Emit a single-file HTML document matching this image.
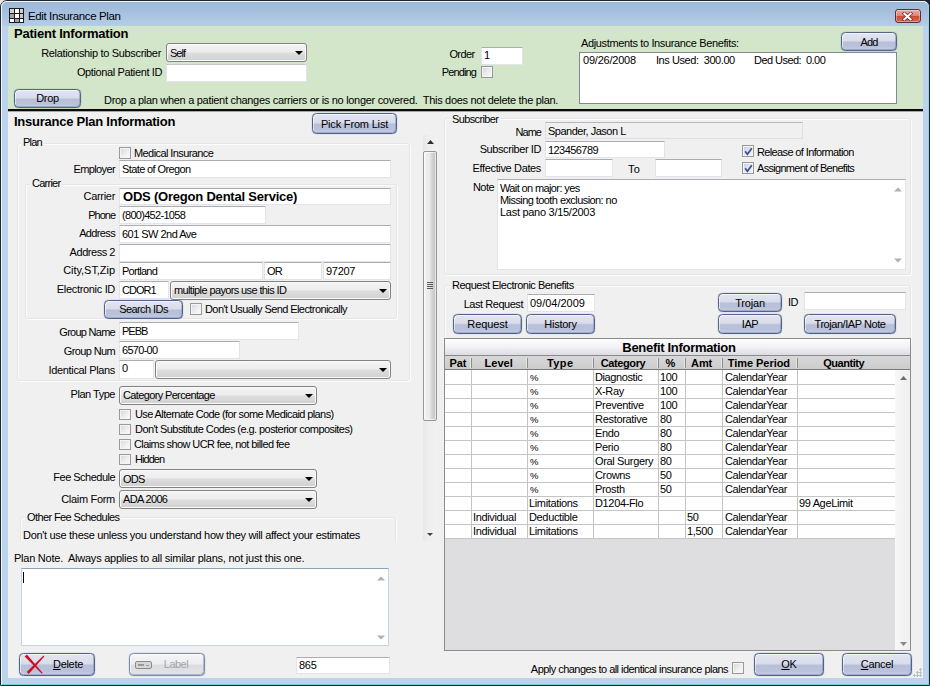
<!DOCTYPE html>
<html>
<head>
<meta charset="utf-8">
<title>Edit Insurance Plan</title>
<style>
html,body{margin:0;padding:0;}
body{width:930px;height:686px;overflow:hidden;background:#e9e9e2;font-family:"Liberation Sans",sans-serif;font-size:11px;color:#000;letter-spacing:-0.3px;position:relative;}
.a{position:absolute;white-space:pre;line-height:13px;}
.r{text-align:right;}
.b13{font-weight:bold;font-size:13px;letter-spacing:-0.25px;line-height:15px;}
#win{position:absolute;left:0;top:0;width:928px;height:684px;border:1px solid #1c2630;border-radius:7px 7px 1px 1px;background:#bbd3ec;overflow:hidden;}
#winhi{position:absolute;left:1px;top:1px;width:928px;height:684px;border:1px solid #f4f8fc;border-bottom-color:#6fcfe2;border-right-color:#86d4e6;border-radius:6px 6px 0 0;box-sizing:border-box;}
#title{position:absolute;left:2px;top:2px;width:926px;height:24px;background:linear-gradient(#9db9d8 0,#a5c0de 40%,#b4cde8 100%);border-radius:5px 5px 0 0;}
#client{position:absolute;left:7.5px;top:26px;width:915px;height:652px;background:#f0f0f0;}
#green{position:absolute;left:7.5px;top:26px;width:915px;height:83px;background:#d3e6c9;}
#bline{position:absolute;left:7.5px;top:109px;width:915px;height:2px;background:#0a0a0a;box-shadow:0 1px 0 rgba(0,0,0,.3);}
.tb{position:absolute;box-sizing:border-box;background:#fff;border:1px solid #e1e5ea;border-top-color:#abadb3;white-space:pre;line-height:14px;padding:1px 0 0 2px;overflow:hidden;}
.cb{position:absolute;box-sizing:border-box;border:1px solid #828282;border-radius:3px;background:linear-gradient(#f4f4f4 0,#ececec 48%,#dedede 52%,#d0d0d0 100%);box-shadow:inset 0 0 0 1px #fbfbfb;white-space:pre;line-height:15px;padding:1px 0 0 3px;overflow:hidden;}
.cb:after{content:"";position:absolute;right:3px;top:7px;border:4px solid transparent;border-top:4px solid #000;border-bottom:0;}
.ck{position:absolute;box-sizing:border-box;width:12px;height:12px;border:1px solid #98999a;background:linear-gradient(135deg,#d4d5d6 0,#eeeeef 55%,#fbfbfb 100%);box-shadow:inset 0 0 0 1px #f4f4f4;}
.gb{position:absolute;box-sizing:border-box;border:1px solid #e5e5e5;border-radius:3px;box-shadow:inset 1px 1px 0 #fcfcfc,1px 1px 0 #fcfcfc;}
.gl{position:absolute;background:#f0f0f0;padding:0 2px;line-height:13px;white-space:pre;}
.bt{position:absolute;box-sizing:border-box;border:1px solid #51648a;border-radius:4.5px;text-align:center;white-space:pre;
 background:linear-gradient(#e3e6f0 0,#d9dcea 45%,#b7bfd9 55%,#b9c1db 80%,#c6cce1 100%);box-shadow:inset 1px 1px 0 rgba(255,255,255,.55),inset -1px -1px 0 rgba(110,128,170,.45),0 0 1px rgba(60,80,120,.75);}
</style>
</head>
<body>
<div style="position:absolute;left:922px;top:0;width:8px;height:8px;background:#20242a"></div>
<div id="win">
</div>
<div id="winhi"></div>
<div id="title"></div>
<div id="client"></div>
<div id="green"></div>
<div id="bline"></div>
<!--TITLE-->
<svg class="a" style="left:9px;top:8px" width="15" height="15" viewBox="0 0 15 15">
<rect x="0" y="0" width="15" height="15" fill="#1c1c1c"/>
<rect x="1" y="1" width="4" height="4" fill="#d9cdd1"/><rect x="6" y="1" width="4" height="4" fill="#ffffff"/><rect x="11" y="1" width="3" height="4" fill="#d9cdd1"/>
<rect x="1" y="6" width="4" height="4" fill="#a6a2a6"/><rect x="6" y="6" width="4" height="4" fill="#ffffff"/><rect x="11" y="6" width="3" height="4" fill="#cfc6ca"/>
<rect x="1" y="11" width="4" height="3" fill="#ffffff"/><rect x="6" y="11" width="4" height="3" fill="#a6a2a6"/><rect x="11" y="11" width="3" height="3" fill="#ffffff"/>
</svg>
<div class="a" style="left:28px;top:9px;font-size:11.5px;line-height:14px;color:#000;letter-spacing:-0.38px">Edit Insurance Plan</div>
<div class="a" style="left:895px;top:9px;width:26px;height:14px;box-sizing:border-box;border:1px solid #57303a;border-radius:3px;background:linear-gradient(#e9aca0 0,#dd8474 48%,#cc4b36 52%,#d8644a 100%);box-shadow:inset 0 0 0 1px rgba(255,255,255,.35)"></div>
<svg class="a" style="left:902px;top:11.5px" width="11" height="9" viewBox="0 0 11 9"><path d="M2.3 1.6 L8.7 7.4 M8.7 1.6 L2.3 7.4" stroke="#5a3038" stroke-width="3.4" stroke-linecap="square"/><path d="M2.3 1.6 L8.7 7.4 M8.7 1.6 L2.3 7.4" stroke="#fff" stroke-width="2" stroke-linecap="square"/></svg>
<!--GREEN-->
<div class="a b13" style="left:14px;top:26px;letter-spacing:-0.22px">Patient Information</div>
<div class="a r" style="left:20px;width:141px;top:47px;letter-spacing:-0.33px">Relationship to Subscriber</div>
<div class="cb" style="left:166px;top:43px;width:141px;height:19px;padding-top:2px;letter-spacing:-1.0px">Self</div>
<div class="a r" style="left:20px;width:142px;top:66px;letter-spacing:-0.38px">Optional Patient ID</div>
<div class="tb" style="left:166px;top:64px;width:141px;height:18px;border-top-color:#c2c8c6"></div>
<div class="bt" style="left:14px;top:89px;width:67px;height:19px;line-height:17px">Drop</div>
<div class="a" style="left:104px;top:94px;letter-spacing:-0.3px">Drop a plan when a patient changes carriers or is no longer covered.  This does not delete the plan.</div>
<div class="a r" style="left:400px;width:74.5px;top:48px;letter-spacing:-0.61px">Order</div>
<div class="tb" style="left:481px;top:47px;width:42px;height:18px;padding-top:0">1</div>
<div class="a r" style="left:400px;width:76px;top:66px;letter-spacing:-0.88px">Pending</div>
<div class="ck" style="left:481px;top:66px"></div>
<div class="a" style="left:581px;top:37px;letter-spacing:-0.36px">Adjustments to Insurance Benefits:</div>
<div class="bt" style="left:841px;top:32px;width:56px;height:19px;line-height:18px;letter-spacing:-0.8px">Add</div>
<div class="tb" style="left:579px;top:52px;width:318px;height:52px;border-color:#828790"></div>
<div class="a" style="left:583px;top:54px;letter-spacing:-0.22px">09/26/2008</div>
<div class="a" style="left:656px;top:54px;letter-spacing:-0.44px">Ins Used:  300.00</div>
<div class="a" style="left:754px;top:54px;letter-spacing:-0.55px">Ded Used:  0.00</div>
<!--LEFT-->
<div class="a b13" style="left:14px;top:114px;letter-spacing:-0.25px">Insurance Plan Information</div>
<div class="bt" style="left:312px;top:113px;width:85px;height:21px;line-height:20px;letter-spacing:-0.18px">Pick From List</div>
<!-- scroll panel -->
<div id="lp" style="position:absolute;left:14px;top:135px;width:410px;height:407px;overflow:hidden">
<div style="position:absolute;left:-14px;top:-135px">
<div class="gb" style="left:17px;top:143px;width:393px;height:238px"></div>
<div class="gl" style="left:21px;top:136px;letter-spacing:-0.8px">Plan</div>
<div class="ck" style="left:119px;top:147px"></div>
<div class="a" style="left:134px;top:147px;letter-spacing:-0.59px">Medical Insurance</div>
<div class="a r" style="left:20px;width:95px;top:163px;letter-spacing:-0.63px">Employer</div>
<div class="tb" style="left:119px;top:160px;width:272px;height:18px;letter-spacing:-0.61px">State of Oregon</div>
<div class="gb" style="left:25px;top:184px;width:372px;height:135px"></div>
<div class="gl" style="left:30px;top:177px;letter-spacing:-0.75px">Carrier</div>
<div class="a r" style="left:20px;width:95px;top:190px">Carrier</div>
<div class="tb" style="left:119px;top:188px;width:272px;height:17px;font-weight:bold;font-size:13px;line-height:14px;padding-left:3px;letter-spacing:-0.21px">ODS (Oregon Dental Service)</div>
<div class="a r" style="left:20px;width:95px;top:209px;letter-spacing:-1.0px">Phone</div>
<div class="tb" style="left:119px;top:206px;width:147px;height:18px;letter-spacing:-0.7px">(800)452-1058</div>
<div class="a r" style="left:20px;width:95px;top:227px;letter-spacing:-0.64px">Address</div>
<div class="tb" style="left:119px;top:225px;width:272px;height:18px;letter-spacing:-0.53px">601 SW 2nd Ave</div>
<div class="a r" style="left:20px;width:95px;top:246px;letter-spacing:-0.46px">Address 2</div>
<div class="tb" style="left:119px;top:244px;width:272px;height:18px"></div>
<div class="a r" style="left:20px;width:95px;top:264px;letter-spacing:-0.05px">City,ST,Zip</div>
<div class="tb" style="left:119px;top:262px;width:144px;height:18px;letter-spacing:-0.74px">Portland</div>
<div class="tb" style="left:264px;top:262px;width:58px;height:18px;letter-spacing:-0.8px">OR</div>
<div class="tb" style="left:323px;top:262px;width:68px;height:18px">97207</div>
<div class="a r" style="left:20px;width:95px;top:283px;letter-spacing:-0.32px">Electronic ID</div>
<div class="tb" style="left:119px;top:281px;width:50px;height:18px;letter-spacing:-1.0px">CDOR1</div>
<div class="cb" style="left:170px;top:281px;width:221px;height:19px;letter-spacing:-0.62px">multiple payors use this ID</div>
<div class="bt" style="left:104px;top:300px;width:79px;height:19px;line-height:16px;letter-spacing:-0.58px">Search IDs</div>
<div class="ck" style="left:190px;top:303px"></div>
<div class="a" style="left:205px;top:303px;letter-spacing:-0.58px">Don't Usually Send Electronically</div>
<div class="a r" style="left:20px;width:95px;top:326px;letter-spacing:-0.73px">Group Name</div>
<div class="tb" style="left:119px;top:322px;width:180px;height:18px;letter-spacing:-1.0px">PEBB</div>
<div class="a r" style="left:20px;width:95px;top:345px;letter-spacing:-0.62px">Group Num</div>
<div class="tb" style="left:119px;top:341px;width:121px;height:18px;letter-spacing:-0.71px">6570-00</div>
<div class="a r" style="left:20px;width:95px;top:364px;letter-spacing:-0.34px">Identical Plans</div>
<div class="tb" style="left:119px;top:360px;width:35px;height:19px;padding-top:0">0</div>
<div class="cb" style="left:155px;top:360px;width:236px;height:19px"></div>
<div class="a r" style="left:20px;width:95px;top:388px;letter-spacing:-0.48px">Plan Type</div>
<div class="cb" style="left:119px;top:386px;width:198px;height:19px;letter-spacing:-0.64px">Category Percentage</div>
<div class="ck" style="left:119px;top:409px;height:11px"></div><div class="a" style="left:135px;top:408px;letter-spacing:-0.6px">Use Alternate Code (for some Medicaid plans)</div>
<div class="ck" style="left:119px;top:424px;height:11px"></div><div class="a" style="left:135px;top:423px;letter-spacing:-0.56px">Don't Substitute Codes (e.g. posterior composites)</div>
<div class="ck" style="left:119px;top:439px;height:11px"></div><div class="a" style="left:134px;top:438px;letter-spacing:-0.59px">Claims show UCR fee, not billed fee</div>
<div class="ck" style="left:119px;top:454px;height:11px"></div><div class="a" style="left:135px;top:453px;letter-spacing:-0.95px">Hidden</div>
<div class="a r" style="left:20px;width:95px;top:471px;letter-spacing:-0.52px">Fee Schedule</div>
<div class="cb" style="left:119px;top:469px;width:198px;height:19px;padding-top:2px;letter-spacing:-0.8px">ODS</div>
<div class="a r" style="left:20px;width:95px;top:493px;letter-spacing:-0.3px">Claim Form</div>
<div class="cb" style="left:119px;top:490px;width:198px;height:19px;letter-spacing:-0.65px">ADA 2006</div>
<div class="gb" style="left:20px;top:517px;width:376px;height:60px"></div>
<div class="gl" style="left:25px;top:511px;letter-spacing:-0.61px">Other Fee Schedules</div>
<div class="a" style="left:23px;top:529px;letter-spacing:-0.31px">Don't use these unless you understand how they will affect your estimates</div>
</div></div>
<!-- left scrollbar -->
<div class="a" style="left:423px;top:135px;width:14px;height:406px;background:linear-gradient(90deg,#e7e7e7 0,#eeeeee 35%,#f1f1f1 100%)"></div>
<svg class="a" style="left:426.5px;top:140px" width="7" height="4" viewBox="0 0 7 4"><path d="M0 4 L3.5 0 L7 4 Z" fill="#303030"/></svg>
<div class="a" style="left:423px;top:151px;width:14px;height:270px;box-sizing:border-box;border:1px solid #979797;border-radius:2px;background:linear-gradient(90deg,#f3f3f3 0,#e9e9e9 45%,#d2d2d2 70%,#c4c4c4 100%);box-shadow:inset 0 0 0 1px rgba(255,255,255,.6)"></div>
<div class="a" style="left:427px;top:282px;width:6px;height:1px;background:#5a5a5a;box-shadow:0 2px 0 #5a5a5a,0 4px 0 #5a5a5a,0 6px 0 #5a5a5a"></div>
<svg class="a" style="left:427px;top:533px" width="6" height="3" viewBox="0 0 6 3"><path d="M0 0 L3 3 L6 0 Z" fill="#404040"/></svg>
<!-- plan note -->
<div class="a" style="left:14px;top:552px;letter-spacing:-0.24px">Plan Note.  Always applies to all similar plans, not just this one.</div>
<div class="tb" style="left:21px;top:568px;width:368px;height:78px;border-color:#c3d3e2;border-top-color:#8aa3bd"></div>
<div class="a" style="left:23px;top:572px;width:1px;height:11px;background:#000"></div>
<svg class="a" style="left:377px;top:576px" width="8" height="5" viewBox="0 0 8 5"><path d="M0 4.5 L4 0.5 L8 4.5 Z" fill="#b0b0b0"/></svg>
<svg class="a" style="left:377px;top:635px" width="8" height="5" viewBox="0 0 8 5"><path d="M0 0.5 L4 4.5 L8 0.5 Z" fill="#b0b0b0"/></svg>
<!--RIGHT-->
<div class="gb" style="left:444px;top:118px;width:467px;height:157px"></div>
<div class="gl" style="left:450px;top:113px;letter-spacing:-0.62px">Subscriber</div>
<div class="a r" style="left:450px;width:91px;top:126px;letter-spacing:-0.97px">Name</div>
<div class="tb" style="left:545px;top:122px;width:258px;height:17px;background:#f0f0f0;border-color:#dcdfe3;border-top-color:#b4b6bb;letter-spacing:-0.49px">Spander, Jason L</div>
<div class="a r" style="left:450px;width:91px;top:143px;letter-spacing:-0.41px">Subscriber ID</div>
<div class="tb" style="left:545px;top:141px;width:120px;height:17px;letter-spacing:-0.56px">123456789</div>
<div class="a r" style="left:450px;width:91px;top:162px;letter-spacing:-0.36px">Effective Dates</div>
<div class="tb" style="left:545px;top:159px;width:68px;height:18px"></div>
<div class="a" style="left:628px;top:163px;letter-spacing:0.2px">To</div>
<div class="tb" style="left:655px;top:159px;width:67px;height:18px"></div>
<div class="ck" style="left:742px;top:145px;background:linear-gradient(135deg,#c4cbe2 0,#e4e7f3 55%,#f6f7fb 100%)"></div>
<svg class="a" style="left:744px;top:147px" width="9" height="9" viewBox="0 0 9 9"><path d="M1.2 4.2 L3.4 7.2 L7.8 1.2" stroke="#3a4f8c" stroke-width="1.7" fill="none"/></svg>
<div class="a" style="left:757px;top:146px;letter-spacing:-0.63px">Release of Information</div>
<div class="ck" style="left:742px;top:162px;background:linear-gradient(135deg,#c4cbe2 0,#e4e7f3 55%,#f6f7fb 100%)"></div>
<svg class="a" style="left:744px;top:164px" width="9" height="9" viewBox="0 0 9 9"><path d="M1.2 4.2 L3.4 7.2 L7.8 1.2" stroke="#3a4f8c" stroke-width="1.7" fill="none"/></svg>
<div class="a" style="left:757px;top:162px;letter-spacing:-0.7px">Assignment of Benefits</div>
<div class="a r" style="left:450px;width:44px;top:181px;letter-spacing:-0.54px">Note</div>
<div class="tb" style="left:497px;top:179px;width:409px;height:91px"></div>
<div class="a" style="left:500px;top:182px;letter-spacing:-0.62px">Wait on major: yes</div>
<div class="a" style="left:500px;top:194px;letter-spacing:-0.57px">Missing tooth exclusion: no</div>
<div class="a" style="left:500px;top:206px;letter-spacing:-0.28px">Last pano 3/15/2003</div>
<svg class="a" style="left:894px;top:187px" width="8" height="5" viewBox="0 0 8 5"><path d="M0 4.5 L4 0.5 L8 4.5 Z" fill="#b0b0b0"/></svg>
<svg class="a" style="left:894px;top:258px" width="8" height="5" viewBox="0 0 8 5"><path d="M0 0.5 L4 4.5 L8 0.5 Z" fill="#b0b0b0"/></svg>
<div class="gb" style="left:444px;top:285px;width:467px;height:60px"></div>
<div class="gl" style="left:450px;top:279px;letter-spacing:-0.5px">Request Electronic Benefits</div>
<div class="a r" style="left:450px;width:73px;top:298px;letter-spacing:-0.46px">Last Request</div>
<div class="tb" style="left:527px;top:294px;width:68px;height:18px;letter-spacing:-0.02px">09/04/2009</div>
<div class="bt" style="left:453px;top:314px;width:69px;height:20px;line-height:18px;letter-spacing:-0.1px">Request</div>
<div class="bt" style="left:526px;top:314px;width:69px;height:20px;line-height:18px;letter-spacing:-0.24px">History</div>
<div class="bt" style="left:718px;top:293px;width:64px;height:19px;line-height:18px;letter-spacing:-0.19px">Trojan</div>
<div class="bt" style="left:718px;top:314px;width:64px;height:20px;line-height:18px;letter-spacing:-0.4px">IAP</div>
<div class="a" style="left:788px;top:296px;letter-spacing:-0.66px">ID</div>
<div class="tb" style="left:804px;top:292px;width:102px;height:18px"></div>
<div class="bt" style="left:804px;top:314px;width:92px;height:20px;line-height:18px;letter-spacing:-0.45px">Trojan/IAP Note</div>
<!--GRID-->
<div id="grid" style="position:absolute;left:444px;top:338px;width:467px;height:313px;box-sizing:border-box;border:1px solid #8c8c8c;background:#dedee1;overflow:hidden">
<div class="a" style="left:0;top:0;width:465px;height:16px;background:linear-gradient(#fdfdfe 0,#f2f2f5 50%,#dcdce3 100%);border-bottom:1px solid #8a8a8a"></div>
<div class="a b13" style="left:1.5px;top:1px;width:465px;text-align:center;letter-spacing:-0.31px">Benefit Information</div>
<div class="a" style="left:0;top:17px;width:465px;height:13px;background:linear-gradient(#d8d8d8 0,#cccccc 100%);border-bottom:1px solid #7a7a7a"></div>
<div class="a" style="left:0px;top:18px;width:26px;text-align:center;font-weight:bold;letter-spacing:-0.1px;line-height:12px">Pat</div>
<div class="a" style="left:26.2px;top:18px;width:55px;text-align:center;font-weight:bold;line-height:12px;letter-spacing:0.08px">Level</div>
<div class="a" style="left:26px;top:19px;width:1px;height:10px;background:#8d8d8d;box-shadow:-1px 0 0 #e6e6e6"></div>
<div class="a" style="left:82.7px;top:18px;width:65px;text-align:center;font-weight:bold;line-height:12px;letter-spacing:0.4px">Type</div>
<div class="a" style="left:82px;top:19px;width:1px;height:10px;background:#8d8d8d;box-shadow:-1px 0 0 #e6e6e6"></div>
<div class="a" style="left:146px;top:18px;width:64px;text-align:center;font-weight:bold;line-height:12px;letter-spacing:-0.37px">Category</div>
<div class="a" style="left:148px;top:19px;width:1px;height:10px;background:#8d8d8d;box-shadow:-1px 0 0 #e6e6e6"></div>
<div class="a" style="left:212.3px;top:18px;width:26px;text-align:center;font-weight:bold;letter-spacing:-0.1px;line-height:12px">%</div>
<div class="a" style="left:213px;top:19px;width:1px;height:10px;background:#8d8d8d;box-shadow:-1px 0 0 #e6e6e6"></div>
<div class="a" style="left:238.6px;top:18px;width:36px;text-align:center;font-weight:bold;letter-spacing:-0.1px;line-height:12px">Amt</div>
<div class="a" style="left:240px;top:19px;width:1px;height:10px;background:#8d8d8d;box-shadow:-1px 0 0 #e6e6e6"></div>
<div class="a" style="left:276.9px;top:18px;width:74px;text-align:center;font-weight:bold;line-height:12px;letter-spacing:-0.04px">Time Period</div>
<div class="a" style="left:277px;top:19px;width:1px;height:10px;background:#8d8d8d;box-shadow:-1px 0 0 #e6e6e6"></div>
<div class="a" style="left:349.7px;top:18px;width:98px;text-align:center;font-weight:bold;line-height:12px;letter-spacing:-0.44px">Quantity</div>
<div class="a" style="left:352px;top:19px;width:1px;height:10px;background:#8d8d8d;box-shadow:-1px 0 0 #e6e6e6"></div>
<div class="a" style="left:0;top:31px;width:450px;height:169px;background:#fff"></div>
<div class="a" style="left:450px;top:31px;width:16px;height:281px;background:linear-gradient(90deg,#f8f8f8,#eeeeee)"></div>
<div class="a" style="left:0;top:45px;width:450px;height:1px;background:#c4c4c4"></div>
<div class="a" style="left:85px;top:32px;line-height:13px;font-size:9.5px">%</div>
<div class="a" style="left:150px;top:32px;line-height:13px;letter-spacing:-0.41px">Diagnostic</div>
<div class="a" style="left:215px;top:32px;line-height:13px;letter-spacing:-0.35px">100</div>
<div class="a" style="left:280px;top:32px;line-height:13px;letter-spacing:-0.41px">CalendarYear</div>
<div class="a" style="left:0;top:59px;width:450px;height:1px;background:#c4c4c4"></div>
<div class="a" style="left:85px;top:46px;line-height:13px;font-size:9.5px">%</div>
<div class="a" style="left:150px;top:46px;line-height:13px;letter-spacing:-0.35px">X-Ray</div>
<div class="a" style="left:215px;top:46px;line-height:13px;letter-spacing:-0.35px">100</div>
<div class="a" style="left:280px;top:46px;line-height:13px;letter-spacing:-0.41px">CalendarYear</div>
<div class="a" style="left:0;top:73px;width:450px;height:1px;background:#c4c4c4"></div>
<div class="a" style="left:85px;top:60px;line-height:13px;font-size:9.5px">%</div>
<div class="a" style="left:150px;top:60px;line-height:13px;letter-spacing:-0.31px">Preventive</div>
<div class="a" style="left:215px;top:60px;line-height:13px;letter-spacing:-0.35px">100</div>
<div class="a" style="left:280px;top:60px;line-height:13px;letter-spacing:-0.41px">CalendarYear</div>
<div class="a" style="left:0;top:87px;width:450px;height:1px;background:#c4c4c4"></div>
<div class="a" style="left:85px;top:74px;line-height:13px;font-size:9.5px">%</div>
<div class="a" style="left:150px;top:74px;line-height:13px;letter-spacing:-0.31px">Restorative</div>
<div class="a" style="left:215px;top:74px;line-height:13px;letter-spacing:-0.35px">80</div>
<div class="a" style="left:280px;top:74px;line-height:13px;letter-spacing:-0.41px">CalendarYear</div>
<div class="a" style="left:0;top:101px;width:450px;height:1px;background:#c4c4c4"></div>
<div class="a" style="left:85px;top:88px;line-height:13px;font-size:9.5px">%</div>
<div class="a" style="left:150px;top:88px;line-height:13px;letter-spacing:-0.35px">Endo</div>
<div class="a" style="left:215px;top:88px;line-height:13px;letter-spacing:-0.35px">80</div>
<div class="a" style="left:280px;top:88px;line-height:13px;letter-spacing:-0.41px">CalendarYear</div>
<div class="a" style="left:0;top:115px;width:450px;height:1px;background:#c4c4c4"></div>
<div class="a" style="left:85px;top:102px;line-height:13px;font-size:9.5px">%</div>
<div class="a" style="left:150px;top:102px;line-height:13px;letter-spacing:-0.35px">Perio</div>
<div class="a" style="left:215px;top:102px;line-height:13px;letter-spacing:-0.35px">80</div>
<div class="a" style="left:280px;top:102px;line-height:13px;letter-spacing:-0.41px">CalendarYear</div>
<div class="a" style="left:0;top:129px;width:450px;height:1px;background:#c4c4c4"></div>
<div class="a" style="left:85px;top:116px;line-height:13px;font-size:9.5px">%</div>
<div class="a" style="left:150px;top:116px;line-height:13px;letter-spacing:-0.35px">Oral Surgery</div>
<div class="a" style="left:215px;top:116px;line-height:13px;letter-spacing:-0.35px">80</div>
<div class="a" style="left:280px;top:116px;line-height:13px;letter-spacing:-0.41px">CalendarYear</div>
<div class="a" style="left:0;top:143px;width:450px;height:1px;background:#c4c4c4"></div>
<div class="a" style="left:85px;top:130px;line-height:13px;font-size:9.5px">%</div>
<div class="a" style="left:150px;top:130px;line-height:13px;letter-spacing:-0.35px">Crowns</div>
<div class="a" style="left:215px;top:130px;line-height:13px;letter-spacing:-0.35px">50</div>
<div class="a" style="left:280px;top:130px;line-height:13px;letter-spacing:-0.41px">CalendarYear</div>
<div class="a" style="left:0;top:157px;width:450px;height:1px;background:#c4c4c4"></div>
<div class="a" style="left:85px;top:144px;line-height:13px;font-size:9.5px">%</div>
<div class="a" style="left:150px;top:144px;line-height:13px;letter-spacing:-0.35px">Prosth</div>
<div class="a" style="left:215px;top:144px;line-height:13px;letter-spacing:-0.35px">50</div>
<div class="a" style="left:280px;top:144px;line-height:13px;letter-spacing:-0.41px">CalendarYear</div>
<div class="a" style="left:0;top:171px;width:450px;height:1px;background:#c4c4c4"></div>
<div class="a" style="left:84px;top:158px;line-height:13px;letter-spacing:-0.35px">Limitations</div>
<div class="a" style="left:150px;top:158px;line-height:13px;letter-spacing:-0.35px">D1204-Flo</div>
<div class="a" style="left:354px;top:158px;line-height:13px;letter-spacing:-0.35px">99 AgeLimit</div>
<div class="a" style="left:0;top:185px;width:450px;height:1px;background:#c4c4c4"></div>
<div class="a" style="left:28px;top:172px;line-height:13px;letter-spacing:-0.35px">Individual</div>
<div class="a" style="left:84px;top:172px;line-height:13px;letter-spacing:-0.35px">Deductible</div>
<div class="a" style="left:242px;top:172px;line-height:13px;letter-spacing:-0.35px">50</div>
<div class="a" style="left:280px;top:172px;line-height:13px;letter-spacing:-0.41px">CalendarYear</div>
<div class="a" style="left:0;top:199px;width:450px;height:1px;background:#c4c4c4"></div>
<div class="a" style="left:28px;top:186px;line-height:13px;letter-spacing:-0.35px">Individual</div>
<div class="a" style="left:84px;top:186px;line-height:13px;letter-spacing:-0.35px">Limitations</div>
<div class="a" style="left:242px;top:186px;line-height:13px;letter-spacing:-0.35px">1,500</div>
<div class="a" style="left:280px;top:186px;line-height:13px;letter-spacing:-0.41px">CalendarYear</div>
<div class="a" style="left:26px;top:31px;width:1px;height:169px;background:#c4c4c4"></div>
<div class="a" style="left:82px;top:31px;width:1px;height:169px;background:#c4c4c4"></div>
<div class="a" style="left:148px;top:31px;width:1px;height:169px;background:#c4c4c4"></div>
<div class="a" style="left:213px;top:31px;width:1px;height:169px;background:#c4c4c4"></div>
<div class="a" style="left:240px;top:31px;width:1px;height:169px;background:#c4c4c4"></div>
<div class="a" style="left:277px;top:31px;width:1px;height:169px;background:#c4c4c4"></div>
<div class="a" style="left:352px;top:31px;width:1px;height:169px;background:#c4c4c4"></div>
<svg class="a" style="left:455px;top:37px" width="7" height="4" viewBox="0 0 7 4"><path d="M0 4 L3.5 0 L7 4 Z" fill="#6e6e6e"/></svg>
<svg class="a" style="left:455px;top:303px" width="7" height="4" viewBox="0 0 7 4"><path d="M0 0 L3.5 4 L7 0 Z" fill="#8a8a8a"/></svg>
</div>
<div class="bt" style="left:19px;top:653px;width:76px;height:23px;line-height:20px;padding-left:22px"><u>D</u>elete</div>
<svg class="a" style="left:24px;top:654px" width="22" height="21" viewBox="0 0 22 21"><path d="M0.7 2.4 L2.9 0.4 L18.7 19.0 L17.9 19.8 Z" fill="#cf0d1c"/><path d="M20.3 2.4 L19.5 1.6 L2.7 18.1 L4.7 20.1 Z" fill="#cf0d1c"/></svg>
<div class="bt" style="left:129px;top:653px;width:76px;height:23px;line-height:20px;color:#a3a3a6;border-color:#7b8cab;padding-left:18px;background:linear-gradient(#f5f5f7 0,#eeeef1 45%,#dcdde2 55%,#e2e3e7 100%);letter-spacing:-0.52px">Label</div>
<div class="a" style="left:135px;top:661px;width:17px;height:8px;box-sizing:border-box;border:1px solid #8a8a8a;border-radius:2px;background:#d6d6d6"></div><div class="a" style="left:138px;top:664px;width:6px;height:2px;background:#9a9a9a"></div><div class="a" style="left:146px;top:665px;width:3px;height:1px;background:#9a9a9a"></div>
<div class="tb" style="left:296px;top:657px;width:94px;height:17px;padding-top:0">865</div>
<div class="a r" style="left:480px;width:248px;top:663px;letter-spacing:-0.54px">Apply changes to all identical insurance plans</div>
<div class="ck" style="left:732px;top:662px"></div>
<div class="bt" style="left:754px;top:653px;width:70px;height:23px;line-height:21px"><u>O</u>K</div>
<div class="bt" style="left:842px;top:653px;width:70px;height:23px;line-height:21px"><u>C</u>ancel</div>
<div class="a" style="left:913px;top:668px;width:9px;height:9px;background:
 radial-gradient(circle at 7.5px 7.5px,#b8c0cc 0,#b8c0cc 1px,transparent 1.2px),
 radial-gradient(circle at 4.5px 7.5px,#b8c0cc 0,#b8c0cc 1px,transparent 1.2px),
 radial-gradient(circle at 1.5px 7.5px,#b8c0cc 0,#b8c0cc 1px,transparent 1.2px),
 radial-gradient(circle at 7.5px 4.5px,#b8c0cc 0,#b8c0cc 1px,transparent 1.2px),
 radial-gradient(circle at 4.5px 4.5px,#b8c0cc 0,#b8c0cc 1px,transparent 1.2px),
 radial-gradient(circle at 7.5px 1.5px,#b8c0cc 0,#b8c0cc 1px,transparent 1.2px)"></div>
</body>
</html>
